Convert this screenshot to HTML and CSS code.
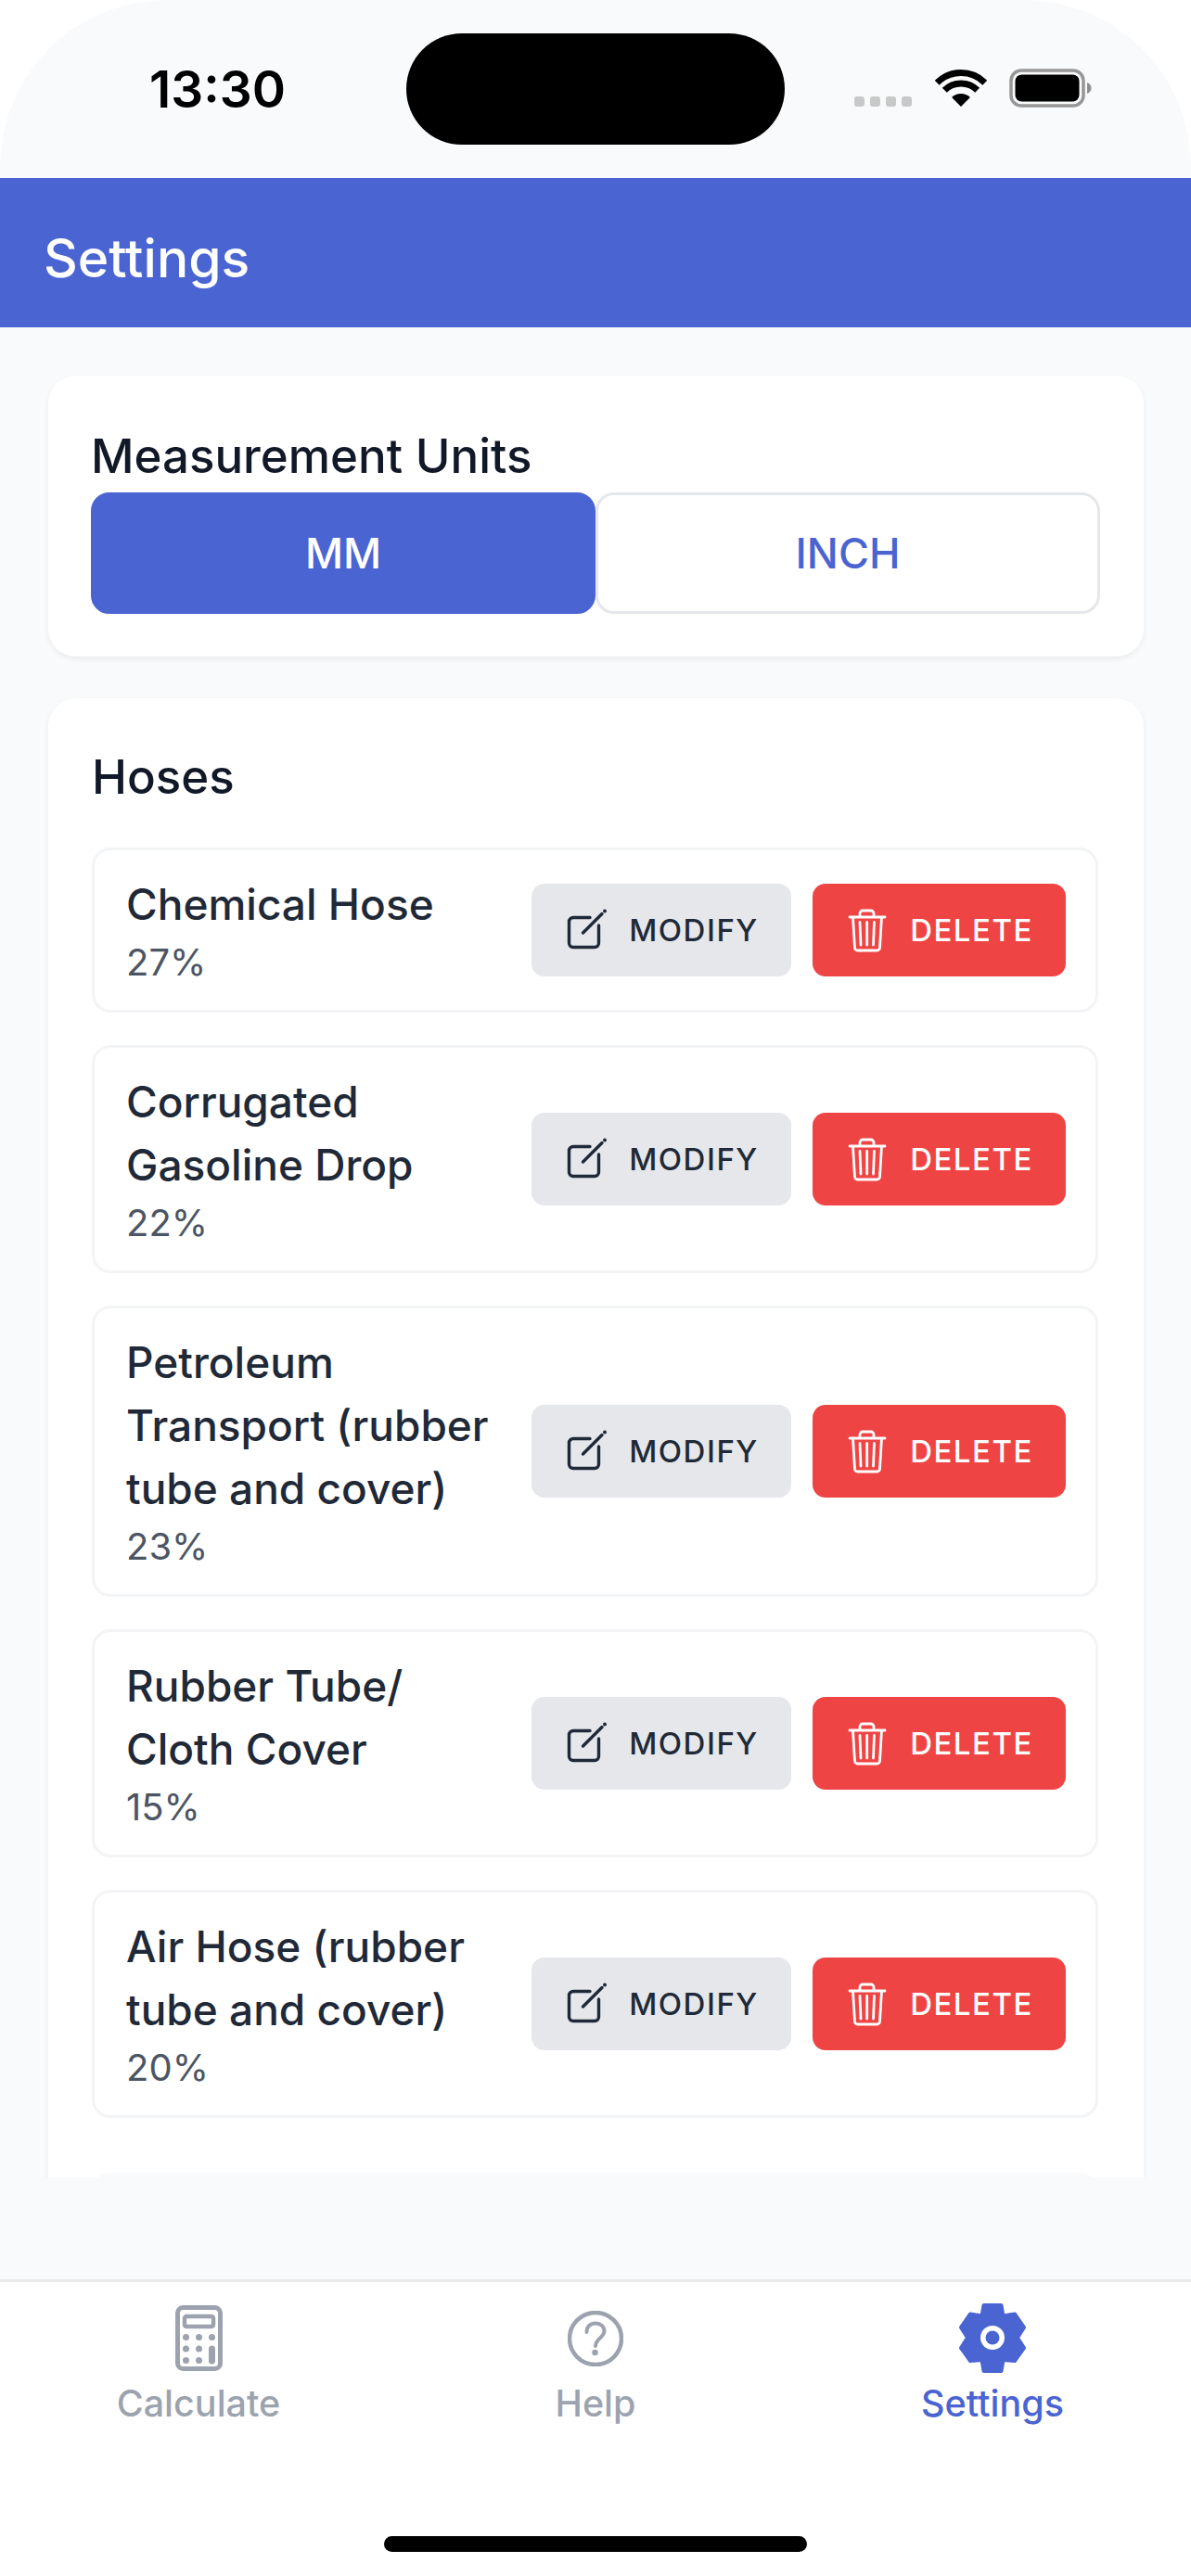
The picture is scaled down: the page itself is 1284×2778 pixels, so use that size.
FILE: index.html
```html
<!DOCTYPE html>
<html lang="en">
<head>
    <meta charset="UTF-8">
    <meta name="viewport" content="width=device-width, initial-scale=1.0">
    <title>Settings</title>
    <link rel="stylesheet" href="styles.css">
</head>
<body>
    <svg class="defs" width="0" height="0">
        <symbol id="ico-edit" viewBox="0 0 48 48">
            <path d="M28 10.5H10a4.5 4.5 0 0 0-4.500 4.500v23a4.500 4.500 0 0 0 4.500 4.500h23a4.500 4.500 0 0 0 4.500-4.500V19" fill="none" stroke="currentColor" stroke-width="3.400" stroke-linecap="round"/>
            <path d="M20.500 27L41 6.500" fill="none" stroke="currentColor" stroke-width="3.400" stroke-linecap="round"/>
            <circle cx="44" cy="3.500" r="2" fill="currentColor"/>
        </symbol>
        <symbol id="ico-trash" viewBox="0 0 48 50">
            <path d="M5 11H43M16 10V7a3 3 0 0 1 3-3h9a3 3 0 0 1 3 3v3M8.500 11L10.500 44a3 3 0 0 0 3 3H34.500a3 3 0 0 0 3-3L39.500 11M16 16.500L17 41M23.700 16.500V41M31.500 16.500L30.500 41" fill="none" stroke="currentColor" stroke-width="2.800" stroke-linecap="round" stroke-linejoin="round"/>
        </symbol>
    </svg>

    <div class="phone">
        <div class="status-bar">
            <span class="time">13:30</span>
            <div class="island"></div>
            <div class="status-icons">
                <div class="signal"><i></i><i></i><i></i><i></i></div>
                <svg class="wifi" width="56" height="40" viewBox="0 0 56 40">
                    <path d="M2.200 14.200A36.500 36.500 0 0 1 53.800 14.200" fill="none" stroke="#000" stroke-width="7"/>
                    <path d="M10.300 22.300A25 25 0 0 1 45.700 22.300" fill="none" stroke="#000" stroke-width="7"/>
                    <path d="M28 40L18.100 30.100A14 14 0 0 1 37.900 30.100Z" fill="#000"/>
                </svg>
                <svg class="battery" width="90" height="42" viewBox="0 0 90 42">
                    <rect x="2" y="2" width="78" height="38" rx="11" fill="none" stroke="#979797" stroke-width="3.500"/>
                    <rect x="6.500" y="6.500" width="69" height="29" rx="7" fill="#000"/>
                    <path d="M84 15c3 1 4.500 3.500 4.500 6s-1.500 5-4.500 6z" fill="#8e8e8e"/>
                </svg>
            </div>
        </div>

        <header class="top-bar">
            <h1>Settings</h1>
        </header>

        <main class="content">
            <section class="card units">
                <h2>Measurement Units</h2>
                <div class="toggle">
                    <button class="toggle-btn active">MM</button>
                    <button class="toggle-btn">INCH</button>
                </div>
            </section>

            <section class="card hoses">
                <h2 class="hoses-title">Hoses</h2>

                <div class="hose">
                    <div class="hose-info">
                        <div class="hose-name">Chemical Hose</div>
                        <div class="hose-pct">27%</div>
                    </div>
                    <div class="hose-actions">
                        <button class="btn btn-modify"><svg class="btn-ico"><use href="#ico-edit"/></svg>MODIFY</button>
                        <button class="btn btn-delete"><svg class="btn-ico"><use href="#ico-trash"/></svg>DELETE</button>
                    </div>
                </div>

                <div class="hose">
                    <div class="hose-info">
                        <div class="hose-name">Corrugated Gasoline Drop</div>
                        <div class="hose-pct">22%</div>
                    </div>
                    <div class="hose-actions">
                        <button class="btn btn-modify"><svg class="btn-ico"><use href="#ico-edit"/></svg>MODIFY</button>
                        <button class="btn btn-delete"><svg class="btn-ico"><use href="#ico-trash"/></svg>DELETE</button>
                    </div>
                </div>

                <div class="hose">
                    <div class="hose-info">
                        <div class="hose-name">Petroleum Transport (rubber tube and cover)</div>
                        <div class="hose-pct">23%</div>
                    </div>
                    <div class="hose-actions">
                        <button class="btn btn-modify"><svg class="btn-ico"><use href="#ico-edit"/></svg>MODIFY</button>
                        <button class="btn btn-delete"><svg class="btn-ico"><use href="#ico-trash"/></svg>DELETE</button>
                    </div>
                </div>

                <div class="hose">
                    <div class="hose-info">
                        <div class="hose-name">Rubber Tube/ Cloth Cover</div>
                        <div class="hose-pct">15%</div>
                    </div>
                    <div class="hose-actions">
                        <button class="btn btn-modify"><svg class="btn-ico"><use href="#ico-edit"/></svg>MODIFY</button>
                        <button class="btn btn-delete"><svg class="btn-ico"><use href="#ico-trash"/></svg>DELETE</button>
                    </div>
                </div>

                <div class="hose">
                    <div class="hose-info">
                        <div class="hose-name">Air Hose (rubber tube and cover)</div>
                        <div class="hose-pct">20%</div>
                    </div>
                    <div class="hose-actions">
                        <button class="btn btn-modify"><svg class="btn-ico"><use href="#ico-edit"/></svg>MODIFY</button>
                        <button class="btn btn-delete"><svg class="btn-ico"><use href="#ico-trash"/></svg>DELETE</button>
                    </div>
                </div>

                <div class="add-block"></div>
            </section>
        </main>

        <nav class="tab-bar">
            <div class="tabs">
                <div class="tab">
                    <div class="tab-icon">
                        <svg width="51" height="71" viewBox="0 0 51 71">
                            <rect x="2.500" y="2.500" width="46" height="66" rx="6" fill="none" stroke="currentColor" stroke-width="5"/>
                            <rect x="10" y="12" width="31" height="11" rx="2" fill="none" stroke="currentColor" stroke-width="4.500"/>
                            <circle cx="11.500" cy="34.500" r="3.500" fill="currentColor"/>
                            <circle cx="25.500" cy="34.500" r="3.500" fill="currentColor"/>
                            <circle cx="39.500" cy="34.500" r="3.500" fill="currentColor"/>
                            <circle cx="11.500" cy="47" r="3.500" fill="currentColor"/>
                            <circle cx="25.500" cy="47" r="3.500" fill="currentColor"/>
                            <circle cx="11.500" cy="59.500" r="3.500" fill="currentColor"/>
                            <circle cx="25.500" cy="59.500" r="3.500" fill="currentColor"/>
                            <rect x="36" y="43.500" width="7" height="20" rx="3.500" fill="currentColor"/>
                        </svg>
                    </div>
                    <span class="tab-label">Calculate</span>
                </div>
                <div class="tab">
                    <div class="tab-icon">
                        <svg width="60" height="60" viewBox="0 0 60 60">
                            <circle cx="30" cy="30" r="28" fill="none" stroke="currentColor" stroke-width="4.500"/>
                            <path d="M20.500 23C20.500 17 24.500 13.500 30 13.500C35.500 13.500 39.500 17 39.500 22C39.500 29 30 29.500 30 38" fill="none" stroke="currentColor" stroke-width="4" stroke-linecap="round"/>
                            <circle cx="29.500" cy="45" r="3.300" fill="currentColor"/>
                        </svg>
                    </div>
                    <span class="tab-label">Help</span>
                </div>
                <div class="tab tab-active">
                    <div class="tab-icon">
                        <svg width="72" height="75" viewBox="0 0 72 75">
                            <polygon points="26.500,2 45.500,2 47.500,13.500 60,11.500 70,26 63,37 70,48 60,62 47.500,61 45.500,73 26.500,73 24.500,61 12,62 2,48 9,37 2,26 12,11.500 24.500,13.500" fill="currentColor" stroke="currentColor" stroke-width="4" stroke-linejoin="round"/>
                            <circle cx="36" cy="37" r="13" fill="#fff"/>
                            <circle cx="36" cy="37" r="7.500" fill="currentColor"/>
                        </svg>
                    </div>
                    <span class="tab-label">Settings</span>
                </div>
            </div>
            <div class="home-indicator"></div>
        </nav>
    </div>
</body>
</html>
```

FILE: styles.css
```css
* {
    box-sizing: border-box;
}

body {
    font-family: Inter, "Noto Sans", sans-serif;
    margin: 0;
    padding: 0;
    background-color: #fff;
}

.defs {
    position: absolute;
}

.phone {
    height: 2778px;
    display: flex;
    flex-direction: column;
    overflow: hidden;
    background-color: #f9fafb;
    border-radius: 180px 180px 0 0;
}

/* status bar */
.status-bar {
    height: 192px;
    flex: none;
    display: flex;
    padding: 36px 0 0 161px;
}

.time {
    flex: none;
    width: 277px;
    margin-top: 28px;
    font-size: 55px;
    line-height: 64px;
    font-weight: 600;
    color: #000;
}

.island {
    flex: none;
    width: 408px;
    height: 120px;
    border-radius: 60px;
    background: #000;
}

.status-icons {
    flex: none;
    display: flex;
    align-items: flex-start;
    margin-left: 75px;
}

.signal {
    display: flex;
    gap: 6px;
    margin-top: 68px;
    margin-right: 25px;
}

.signal i {
    width: 11px;
    height: 11px;
    border-radius: 3px;
    background: #c8c8c8;
}

.wifi {
    flex: none;
    margin-top: 39px;
    margin-right: 24px;
}

.battery {
    margin-top: 38px;
    flex: none;
}

/* header */
.top-bar {
    height: 161px;
    flex: none;
    display: flex;
    align-items: center;
    padding: 11px 47px 0;
    background: #4a64d2;
}

.top-bar h1 {
    margin: 0;
    color: #fff;
    font-size: 57px;
    font-weight: 500;
}

/* scroll area */
.content {
    flex: 1;
    min-height: 0;
    overflow: hidden;
    margin-bottom: 110px;
    padding: 52px 51px 0 52px;
}

.card {
    background: #fff;
    border-radius: 30px;
    box-shadow: 0 3px 6px rgba(0, 0, 0, 0.06);
}

.card h2 {
    margin: 0;
    color: #111827;
    font-size: 51px;
    font-weight: 500;
}

.units {
    height: 303px;
    padding: 48px 47px 0 46px;
}

.units h2 {
    line-height: 78px;
}

.toggle {
    display: flex;
}

.toggle-btn {
    flex: 1;
    height: 131px;
    border: 3px solid #e5e7eb;
    border-radius: 20px;
    background: #fff;
    color: #4a64d2;
    font-family: inherit;
    font-size: 45px;
    font-weight: 500;
}

.toggle-btn.active {
    border-color: #4a64d2;
    background: #4a64d2;
    color: #fff;
}

.hoses {
    margin-top: 45px;
    padding: 57px 49px 46px 47px;
}

.hoses-title {
    line-height: 56px;
    margin-bottom: 48px !important;
}

.hose {
    display: flex;
    align-items: center;
    gap: 19px;
    padding: 24px 32px 25px 34px;
    margin-bottom: 35px;
    border: 3px solid #f3f4f6;
    border-radius: 20px;
    background: #fff;
}

.hose-info {
    flex: 1;
    min-width: 0;
}

.hose-name {
    color: #1f2937;
    font-size: 46px;
    line-height: 68px;
    font-weight: 500;
}

.hose-pct {
    margin-top: 3px;
    color: #4b5563;
    font-size: 40px;
    line-height: 52px;
}

.hose-actions {
    flex: none;
    display: flex;
    gap: 23px;
}

.btn {
    height: 100px;
    display: flex;
    align-items: center;
    justify-content: center;
    gap: 22px;
    border: none;
    border-radius: 14px;
    font-family: inherit;
    font-size: 33px;
    font-weight: 550;
    letter-spacing: 1.500px;
}

.btn-ico {
    width: 48px;
    height: 50px;
    flex: none;
}

.btn-modify {
    width: 280px;
    background: #e5e7eb;
    color: #1f2937;
}

.btn-delete {
    width: 273px;
    background: #ef4444;
    color: #fff;
}

.add-block {
    height: 100px;
    margin-top: 59px;
    border-radius: 20px;
    background: #f9fafb;
}

/* bottom tabs */
.tab-bar {
    height: 320px;
    flex: none;
    display: flex;
    flex-direction: column;
    align-items: center;
    border-top: 3px solid #e8e9eb;
    background: #fff;
}

.tabs {
    width: 100%;
    display: grid;
    grid-template-columns: 1fr 1fr 1fr;
    padding-top: 23px;
}

.tab {
    display: flex;
    flex-direction: column;
    align-items: center;
    color: #9ca3af;
}

.tab-active {
    color: #4a64d2;
}

.tab-icon {
    height: 75px;
    display: flex;
    align-items: center;
    justify-content: center;
}

.tab-label {
    margin-top: 8px;
    font-size: 39.500px;
    line-height: 50px;
    font-weight: 500;
}

.home-indicator {
    width: 456px;
    height: 17px;
    margin-top: auto;
    margin-bottom: 26px;
    border-radius: 9px;
    background: #000;
}
```
